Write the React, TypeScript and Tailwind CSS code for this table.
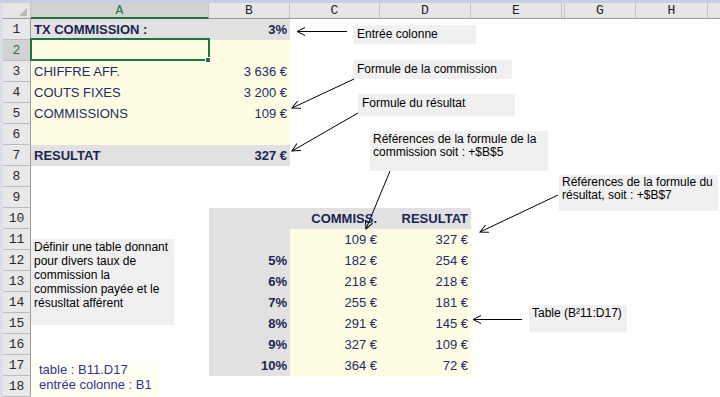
import type { ReactNode } from "react";
import clsx from "clsx";

const GRAY = "bg-[#e1e1e1]";
const YELLOW = "bg-[#fefde4]";

type CellProps = {
  w: string;
  bg?: string;
  right?: boolean;
  bold?: boolean;
  children?: ReactNode;
};

const Cell = ({ w, bg, right, bold, children }: CellProps) => (
  <div
    className={clsx(
      "flex h-full shrink-0 items-center whitespace-nowrap px-[3px] pt-[1px] text-[13px]",
      w,
      bg,
      right && "justify-end",
      bold ? "font-bold text-[#1c2455]" : "text-[#222a6c]"
    )}
  >
    {children}
  </div>
);

type RowProps = {
  n: number;
  active?: boolean;
  a?: CellProps;
  b?: CellProps;
  c?: CellProps;
  d?: CellProps;
};

const Row = ({ n, active, a, b, c, d }: RowProps) => (
  <div className="flex h-[21px]">
    <div
      className={clsx(
        "flex w-[28px] shrink-0 items-center justify-center border-r border-b border-r-[#9f9f9f] border-b-[#bcbcbc] pt-[1px] font-['Liberation_Mono',monospace] text-[13px]",
        active ? "bg-[#d3d3d3] text-[#217346]" : "bg-[#e8e8e8] text-[#2a2a2a]"
      )}
    >
      {n}
    </div>
    <Cell w="w-[178px]" {...a} />
    <Cell w="w-[81px]" right {...b} />
    <Cell w="w-[90px]" right {...c} />
    <Cell w="w-[91px]" right {...d} />
    <div className="flex-1" />
  </div>
);

const HEADERS = [
  { label: "B", w: "w-[81px]" },
  { label: "C", w: "w-[90px]" },
  { label: "D", w: "w-[91px]" },
  { label: "E", w: "w-[91px]" },
];

const TABLE_ROWS = [
  { n: 12, rate: "5%", com: "182 €", res: "254 €" },
  { n: 13, rate: "6%", com: "218 €", res: "218 €" },
  { n: 14, rate: "7%", com: "255 €", res: "181 €" },
  { n: 15, rate: "8%", com: "291 €", res: "145 €" },
  { n: 16, rate: "9%", com: "327 €", res: "109 €" },
  { n: 17, rate: "10%", com: "364 €", res: "72 €" },
];

// x1, y1, x2 (tip), y2
const ARROWS: [number, number, number, number][] = [
  [347, 31.5, 297, 31.5],
  [354, 79, 292, 108],
  [358, 113, 292, 151],
  [390, 171, 366, 229],
  [558, 195, 480, 232],
  [522, 319.5, 473, 319.5],
];

export default function App() {
  return (
    <div className="relative flex h-[397px] w-[720px] flex-col overflow-hidden bg-white font-['Liberation_Sans',Arial,sans-serif]">
      <div className="h-[3px] shrink-0 bg-[#c8d1e3]" />
      <div className="flex flex-1">
        <div className="w-[3px] shrink-0 bg-[#dadeec]" />
        <div className="flex flex-1 flex-col">
          {/* column headers */}
          <div className="flex h-[16px] shrink-0 border-b border-[#9c9c9c] bg-[#e6e6e6] font-['Liberation_Mono',monospace] text-[13px] leading-[15px] text-[#222]">
            <div className="flex w-[28px] shrink-0 items-end justify-end border-r border-[#c4c4c4] pb-[2px] pr-[3px]">
              <svg width="8" height="8" viewBox="0 0 8 8">
                <path d="M8 0 L8 8 L0 8 Z" fill="#b8b8b8" />
              </svg>
            </div>
            <div className="-mb-px flex w-[178px] shrink-0 justify-center border-r border-b-2 border-r-[#c4c4c4] border-b-[#217346] bg-[#d2d2d2] text-[#217346]">
              A
            </div>
            {HEADERS.map((h) => (
              <div key={h.label} className={clsx("flex shrink-0 justify-center border-r border-[#c4c4c4]", h.w)}>
                {h.label}
              </div>
            ))}
            <div className="w-[3px] shrink-0 border-r border-[#c4c4c4]" />
            <div className="flex w-[71px] shrink-0 justify-center border-r border-[#c4c4c4]">G</div>
            <div className="flex w-[72px] shrink-0 justify-center border-r border-[#c4c4c4]">H</div>
            <div className="flex-1" />
          </div>

          <Row
            n={1}
            a={{ w: "w-[178px]", bg: GRAY, bold: true, children: "TX COMMISSION :" }}
            b={{ w: "w-[81px]", bg: GRAY, bold: true, right: true, children: "3%" }}
          />
          <Row n={2} active a={{ w: "w-[178px]", bg: YELLOW }} b={{ w: "w-[81px]", bg: YELLOW }} />
          <Row
            n={3}
            a={{ w: "w-[178px]", bg: YELLOW, children: "CHIFFRE AFF." }}
            b={{ w: "w-[81px]", bg: YELLOW, right: true, children: "3 636 €" }}
          />
          <Row
            n={4}
            a={{ w: "w-[178px]", bg: YELLOW, children: "COUTS FIXES" }}
            b={{ w: "w-[81px]", bg: YELLOW, right: true, children: "3 200 €" }}
          />
          <Row
            n={5}
            a={{ w: "w-[178px]", bg: YELLOW, children: "COMMISSIONS" }}
            b={{ w: "w-[81px]", bg: YELLOW, right: true, children: "109 €" }}
          />
          <Row n={6} a={{ w: "w-[178px]", bg: YELLOW }} b={{ w: "w-[81px]", bg: YELLOW }} />
          <Row
            n={7}
            a={{ w: "w-[178px]", bg: GRAY, bold: true, children: "RESULTAT" }}
            b={{ w: "w-[81px]", bg: GRAY, bold: true, right: true, children: "327 €" }}
          />
          <Row n={8} />
          <Row n={9} />
          <Row
            n={10}
            b={{ w: "w-[81px]", bg: GRAY }}
            c={{ w: "w-[90px]", bg: GRAY, bold: true, right: true, children: "COMMISS." }}
            d={{ w: "w-[91px]", bg: GRAY, bold: true, right: true, children: "RESULTAT" }}
          />
          <Row
            n={11}
            b={{ w: "w-[81px]", bg: GRAY }}
            c={{ w: "w-[90px]", bg: YELLOW, right: true, children: "109 €" }}
            d={{ w: "w-[91px]", bg: YELLOW, right: true, children: "327 €" }}
          />
          {TABLE_ROWS.map((r) => (
            <Row
              key={r.n}
              n={r.n}
              b={{ w: "w-[81px]", bg: GRAY, bold: true, right: true, children: r.rate }}
              c={{ w: "w-[90px]", bg: YELLOW, right: true, children: r.com }}
              d={{ w: "w-[91px]", bg: YELLOW, right: true, children: r.res }}
            />
          ))}
          <Row n={18} />
        </div>
      </div>

      {/* active cell A2 */}
      <div className="absolute left-[30px] top-[38px] h-[23px] w-[180px] border-2 border-[#217346]" />
      <div className="absolute left-[205px] top-[57px] h-[6px] w-[6px] border border-white bg-[#217346]" />

      {/* text boxes */}
      <div className="absolute left-[353px] top-[25px] h-[19px] w-[123px] bg-[#f0f0f0] pl-[4px] pt-[2px] text-[12px] leading-[15px] text-black">
        Entrée colonne
      </div>
      <div className="absolute left-[353px] top-[60px] h-[19px] w-[159px] bg-[#f0f0f0] pl-[4px] pt-[2px] text-[12px] leading-[15px] text-black">
        Formule de la commission
      </div>
      <div className="absolute left-[358px] top-[94px] h-[22px] w-[157px] bg-[#f0f0f0] pl-[4px] pt-[2px] text-[12px] leading-[15px] text-black">
        Formule du résultat
      </div>
      <div className="absolute left-[370px] top-[131px] h-[40px] w-[178px] bg-[#f0f0f0] pl-[3px] pt-[2px] text-[12px] leading-[13px] text-black">
        Références de la formule de la
        <br />
        commission soit : +$B$5
      </div>
      <div className="absolute left-[559px] top-[175px] h-[36px] w-[159px] bg-[#f0f0f0] pl-[3px] pt-[1px] text-[12px] leading-[13px] text-black">
        Références de la formule du
        <br />
        résultat, soit : +$B$7
      </div>
      <div className="absolute left-[31px] top-[239px] h-[86px] w-[143px] whitespace-nowrap bg-[#f0f0f0] pl-[3px] pt-[1px] text-[12px] leading-[14px] text-black">
        Définir une table donnant
        <br />
        pour divers taux de
        <br />
        commission la
        <br />
        commission payée et le
        <br />
        résusltat afférent
      </div>
      <div className="absolute left-[529px] top-[305px] h-[27px] w-[98px] bg-[#f0f0f0] pl-[3px] pt-[1px] text-[12px] leading-[15px] text-black">
        Table (B²11:D17)
      </div>
      <div className="absolute left-[33px] top-[361px] h-[40px] w-[129px] bg-[#fffff4] pl-[6px] pt-[1px] text-[13px] leading-[15px] text-[#33329a]">
        table : B11.D17
        <br />
        entrée colonne : B1
      </div>

      <svg className="pointer-events-none absolute left-0 top-0" width="720" height="397">
        <defs>
          <marker id="tip" markerWidth="10" markerHeight="10" refX="9" refY="5" orient="auto" markerUnits="userSpaceOnUse">
            <path d="M1 1 L9 5 L1 9" fill="none" stroke="#000" strokeWidth="1" />
          </marker>
        </defs>
        {ARROWS.map(([x1, y1, x2, y2], i) => (
          <line key={i} x1={x1} y1={y1} x2={x2} y2={y2} stroke="#000" strokeWidth="1" markerEnd="url(#tip)" />
        ))}
      </svg>
    </div>
  );
}
